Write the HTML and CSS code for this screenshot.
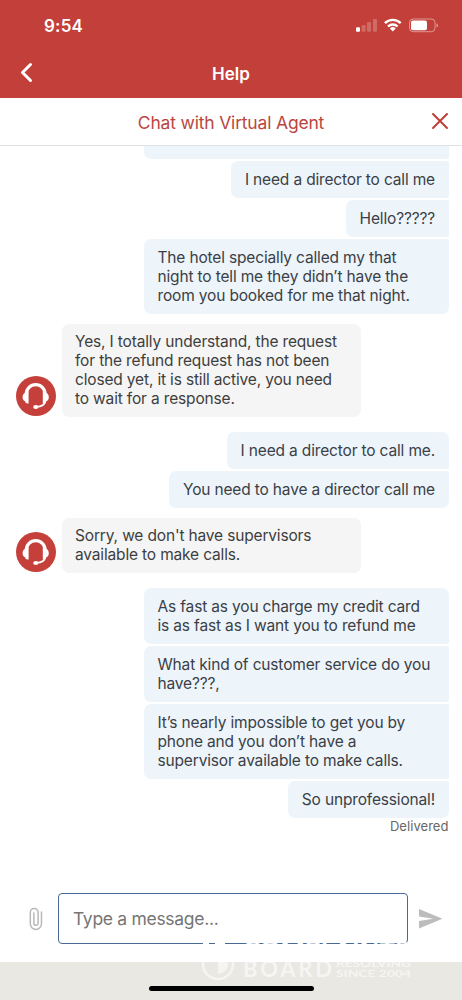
FILE: index.html
```html
<!DOCTYPE html>
<html lang="en">
<head>
<meta charset="utf-8">
<title>Help</title>
<link rel="stylesheet" href="styles.css">
</head>
<body>
<div class="app">
  <header class="top">
    <div class="status">
      <span class="time">9:54</span>
      <svg class="status-icons" width="84" height="16" viewBox="0 0 84 16">
        <g fill="#fff">
          <rect x="0" y="9.3" width="4" height="4.5" rx="1"/>
          <g opacity=".22"><rect x="5.6" y="7" width="4" height="6.8" rx="1"/><rect x="11" y="4" width="4" height="9.8" rx="1"/><rect x="17" y="1" width="4" height="12.8" rx="1"/></g>
        </g>
        <g fill="none" stroke="#fff" stroke-width="2.4">
          <path d="M28.9 5.1a11.2 11.2 0 0 1 15.8 0"/><path d="M32 8.5a6.9 6.9 0 0 1 9.6 0"/>
        </g>
        <path d="M33.900 10.400a4.300 4.300 0 0 1 5.800 0l-2.900 3z" fill="#fff"/>
        <rect x="53.5" y="1" width="25.5" height="12.7" rx="3.6" fill="none" stroke="#fff" stroke-opacity=".45"/>
        <rect x="55" y="2.6" width="16" height="9.6" rx="2" fill="#fff"/>
        <path d="M80.500 5.200c2 .8 2 3.500 0 4.300z" fill="#fff" opacity=".5"/>
      </svg>
    </div>
    <div class="nav">
      <svg class="back" width="14" height="22" viewBox="0 0 14 22"><path d="M11.500 2.500 3.500 10.500l8 8" fill="none" stroke="#fff" stroke-width="3" stroke-linecap="round" stroke-linejoin="round"/></svg>
      <h1 class="title">Help</h1>
    </div>
  </header>
  <div class="subhead">
    <h2 class="agent-title">Chat with Virtual Agent</h2>
    <svg class="close" width="18" height="18" viewBox="0 0 18 18"><path d="M2 2l14 14M16 2 2 16" fill="none" stroke="#bf3f38" stroke-width="2" stroke-linecap="round"/></svg>
  </div>
  <main class="chat">
    <div class="group me">
      <div class="bubble wide cut first"></div>
      <div class="bubble mid">I need a director to call me</div>
      <div class="bubble mid">Hello?????</div>
      <div class="bubble wide last">The hotel specially called my that<br>night to tell me they didn’t have the<br>room you booked for me that night.</div>
    </div>
    <div class="group agent a1">
      <svg class="avatar" width="40" height="40" viewBox="0 0 40 40"><use href="#headset"/></svg>
      <div class="bubble">Yes, I totally understand, the request<br>for the refund request has not been<br>closed yet, it is still active, you need<br>to wait for a response.</div>
    </div>
    <div class="group me m2">
      <div class="bubble first">I need a director to call me.</div>
      <div class="bubble last">You need to have a director call me</div>
    </div>
    <div class="group agent a2">
      <svg class="avatar" width="40" height="40" viewBox="0 0 40 40">
        <g id="headset">
          <circle cx="20" cy="20" r="20" fill="#c5403a"/>
          <path d="M10.300 19.500v-1.500a9.400 9.400 0 0 1 18.800 0v1.500" fill="none" stroke="#fff" stroke-width="3.200"/>
          <path d="M12.600 15v12.500h-1c-1.400 0-2.200-.8-2.500-2.200-1.600-.5-2.500-1.900-2.500-4s.9-3.700 2.500-4.200zM26.800 15v12.500h1c1.400 0 2.200-.8 2.500-2.200 1.600-.5 2.500-1.900 2.500-4s-.9-3.700-2.500-4.200z" fill="#fff"/>
          <path d="M29.400 25c-.6 3.600-3.200 5.600-9 5.900" fill="none" stroke="#fff" stroke-width="1.700"/>
          <ellipse cx="19.800" cy="31" rx="2.600" ry="2" fill="#fff"/>
        </g>
      </svg>
      <div class="bubble">Sorry, we don't have supervisors<br>available to make calls.</div>
    </div>
    <div class="group me m3">
      <div class="bubble wide first">As fast as you charge my credit card<br>is as fast as I want you to refund me</div>
      <div class="bubble wide mid">What kind of customer service do you<br>have???,</div>
      <div class="bubble wide mid">It’s nearly impossible to get you by<br>phone and you don’t have a<br>supervisor available to make calls.</div>
      <div class="bubble last">So unprofessional!</div>
    </div>
    <div class="delivered">Delivered</div>
  </main>
  <div class="composer">
    <svg class="clip" width="14" height="24" viewBox="0 0 14 24"><path d="M12.500 5v11.800a5.600 5.600 0 0 1-11.200 0V5.300a3.900 3.900 0 0 1 7.800 0v10.900a2.100 2.100 0 0 1-4.200 0V6" fill="none" stroke="#b9b9b9" stroke-width="1.500" stroke-linecap="round"/></svg>
    <div class="field">Type a message...</div>
    <svg class="send" width="24" height="20" viewBox="0 0 24 20"><path d="M0 0 23.500 9.800 0 19.600V12l14.500-2.200L0 7.600z" fill="#bcbcbc"/></svg>
  </div>
  <footer class="bottom"><div class="home"></div></footer>
  <svg class="watermark" width="216" height="50" viewBox="0 0 216 50">
    <circle cx="17" cy="31" r="15" fill="none" stroke="#fff" stroke-width="2.500" opacity=".55"/>
    <path d="M17 21v20a10 10 0 0 0 0-20z" fill="#fff" opacity=".55"/>
    <path d="M2 10.200h6m6 0h10" stroke="#fff" stroke-width="2"/>
    <g fill="#fff" font-family="Lato, sans-serif" font-weight="700">
      <text x="42" y="19" font-size="14" textLength="166" lengthAdjust="spacingAndGlyphs">COMPLAINTS</text>
      <g opacity=".6"><text x="42" y="44" font-size="22" textLength="89">BOARD</text>
      <text x="135" y="33.500" font-size="8.500" textLength="75" lengthAdjust="spacingAndGlyphs">RESOLVING</text>
      <text x="135" y="44" font-size="8.500" textLength="75" lengthAdjust="spacingAndGlyphs">SINCE 2004</text></g>
    </g>
  </svg>
</div>
</body>
</html>
```
FILE: styles.css
```css
* { box-sizing: border-box; }
body { margin: 0; font-family: Inter, "Liberation Sans", sans-serif; background: #fff; }
.app { position: relative; width: 462px; height: 1000px; display: flex; flex-direction: column; overflow: hidden; }
.top { height: 98px; flex: none; background: #c24039; color: #fff; }
.status { display: flex; justify-content: space-between; align-items: flex-start; height: 50px; padding: 14px 22px 0 44px; }
.time { font-size: 17px; font-weight: 600; line-height: 24px; letter-spacing: 0.2px; }
.status-icons { margin-top: 4px; }
.nav { display: flex; align-items: center; height: 48px; padding-left: 19px; }
.back { margin-top: -3px; }
.title { margin: 0 33px 0 0; flex: 1; text-align: center; font-size: 17px; font-weight: 600; line-height: 24px; }
.subhead { flex: none; display: flex; align-items: center; height: 48px; padding: 0 13px 0 31px; border-bottom: 1px solid #dfe3e6; }
.agent-title { margin: 1px 0 0; flex: 1; text-align: center; font-size: 17.500px; letter-spacing: -0.180px; font-weight: 400; color: #bb4540; }
.close { margin-top: -2px; }
.chat { flex: 1; display: flex; flex-direction: column; padding: 0 13.500px 0 16px; overflow: hidden; font-size: 15.500px; line-height: 19px; letter-spacing: -0.160px; color: #3b4046; }
.group { display: flex; }
.me { flex-direction: column; align-items: flex-end; gap: 2.500px; }
.bubble { padding: 8.750px 13.500px; border-radius: 7px; white-space: nowrap; background: #edf5fb; }
.me .first { border-bottom-right-radius: 2px; }
.me .mid { border-top-right-radius: 2px; border-bottom-right-radius: 2px; }
.me .last { border-top-right-radius: 2px; }
.wide { width: 304.500px; }
.cut { height: 12.500px; padding: 0; border-top-left-radius: 0; border-top-right-radius: 0; }
.agent { align-items: flex-end; gap: 5.500px; }
.agent .bubble { width: 299px; background: #f5f5f5; color: #3e3e3e; }
.avatar { flex: none; margin-bottom: 1px; }
.a1 { margin-top: 10px; }
.m2 { margin-top: 15px; }
.a2 { margin-top: 10px; }
.m3 { margin-top: 15.250px; }
.delivered { align-self: flex-end; margin-top: 0.500px; font-size: 13px; letter-spacing: 0.050px; line-height: 17px; color: #666; }
.composer { flex: none; display: flex; align-items: center; height: 70px; padding: 1px 19px 18px 29px; }
.field { width: 351px; height: 51px; margin: 0 11px 0 15px; padding-left: 14px; border: 1.500px solid #466a94; border-radius: 4px; font-size: 17.500px; letter-spacing: -0.300px; line-height: 50px; color: #757575; }
.bottom { flex: none; height: 38px; padding-top: 23.500px; background: #e9e8e3; }
.home { width: 165px; height: 5.500px; margin: 0 auto; border-radius: 3px; background: #000; }
.watermark { position: absolute; left: 201px; top: 933px; }
```
